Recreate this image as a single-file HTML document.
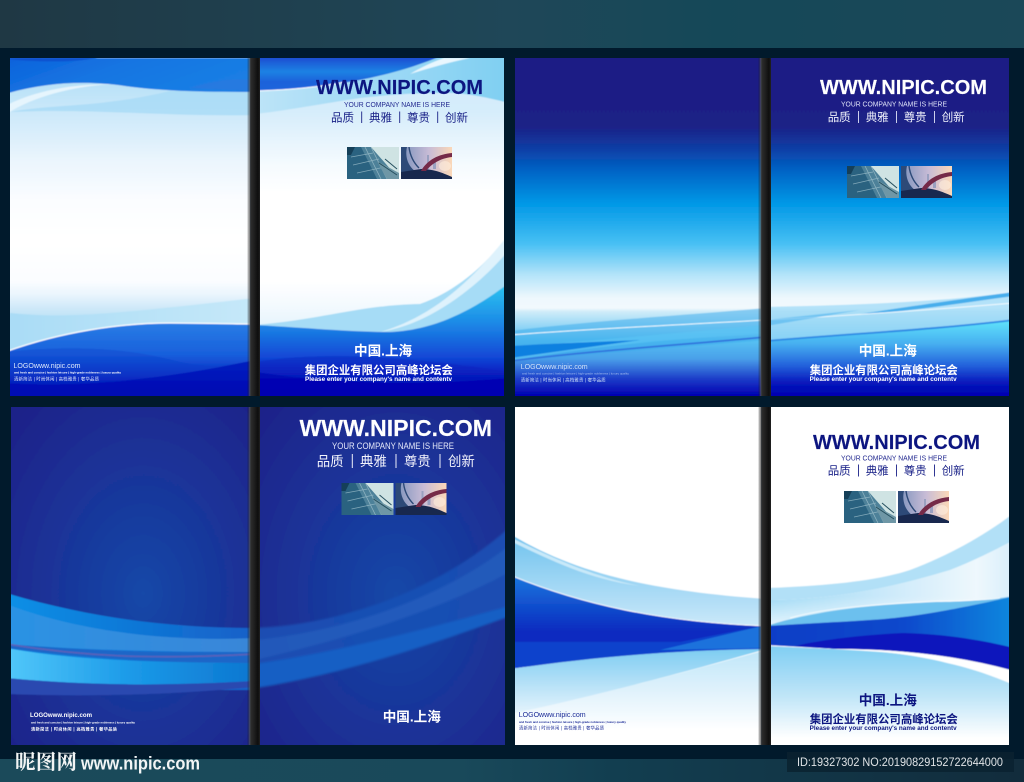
<!DOCTYPE html>
<html><head><meta charset="utf-8"><style>
html,body{margin:0;padding:0;background:#011a2c}
svg{display:block}
text{font-family:"Liberation Sans","Noto Sans CJK SC",sans-serif}
.b{font-weight:700}
.w{font-weight:700;stroke-width:.15;paint-order:stroke}
</style></head><body>
<svg width="1024" height="782" viewBox="0 0 1024 782" xmlns="http://www.w3.org/2000/svg">
<defs>
<filter id="s" x="-5%" y="-5%" width="110%" height="110%"><feGaussianBlur stdDeviation=".55"/></filter>
<filter id="s2" x="-5%" y="-5%" width="110%" height="110%"><feGaussianBlur stdDeviation="1.1"/></filter>
<linearGradient id="top" x1="0" x2="1" y1="0" y2="0"><stop offset="0" stop-color="#1f3844"/><stop offset=".5" stop-color="#1f4758"/><stop offset=".7" stop-color="#154858"/><stop offset="1" stop-color="#1b4858"/></linearGradient>
<linearGradient id="bot" x1="0" x2="1" y1="0" y2="0"><stop offset="0" stop-color="#1b4a5a"/><stop offset=".45" stop-color="#19495a"/><stop offset=".6" stop-color="#123e50"/><stop offset="1" stop-color="#122c3c"/></linearGradient>
<linearGradient id="spine" x1="0" x2="1" y1="0" y2="0"><stop offset="0" stop-color="#000" stop-opacity="0"/><stop offset=".2" stop-color="#555" stop-opacity=".7"/><stop offset=".32" stop-color="#2c2c2c"/><stop offset=".6" stop-color="#1c1c1c"/><stop offset=".85" stop-color="#0e0e0e"/><stop offset="1" stop-color="#222"/></linearGradient>

<linearGradient id="tlBase" gradientUnits="userSpaceOnUse" x1="0" x2="0" y1="58" y2="396"><stop offset="0" stop-color="#a8dbf6"/><stop offset=".18" stop-color="#d0eafa"/><stop offset=".3" stop-color="#eaf5fd"/><stop offset=".42" stop-color="#fbfdff"/><stop offset=".54" stop-color="#ffffff"/><stop offset=".66" stop-color="#fbfdff"/><stop offset=".7" stop-color="#eaf5fd"/><stop offset=".745" stop-color="#cbe7f8"/><stop offset=".78" stop-color="#b8e0f7"/><stop offset="1" stop-color="#a5d8f5"/></linearGradient>
<linearGradient id="trwB" gradientUnits="userSpaceOnUse" x1="0" x2="0" y1="58" y2="396"><stop offset="0" stop-color="#cfe9fa"/><stop offset=".16" stop-color="#d6edfb"/><stop offset=".24" stop-color="#e6f4fd"/><stop offset=".32" stop-color="#f6fbfe"/><stop offset=".4" stop-color="#ffffff"/><stop offset=".66" stop-color="#ffffff"/><stop offset=".74" stop-color="#f2f9fe"/><stop offset=".8" stop-color="#e4f4fc"/></linearGradient>
<linearGradient id="trBase" gradientUnits="userSpaceOnUse" x1="0" x2="0" y1="58" y2="396"><stop offset="0" stop-color="#1e1f85"/><stop offset=".2" stop-color="#1c2086"/><stop offset=".27" stop-color="#0e3fa6"/><stop offset=".33" stop-color="#0062c4"/><stop offset=".43" stop-color="#0098e6"/><stop offset=".55" stop-color="#48c0f4"/><stop offset=".64" stop-color="#b2e3f9"/><stop offset=".71" stop-color="#eef8fd"/><stop offset=".74" stop-color="#f2f9fd"/><stop offset=".75" stop-color="#d0ecf9"/><stop offset=".84" stop-color="#55bff2"/><stop offset=".89" stop-color="#4a9fe9"/><stop offset=".95" stop-color="#1c3cc8"/><stop offset="1" stop-color="#0000b0"/></linearGradient>
<linearGradient id="trLow" gradientUnits="userSpaceOnUse" x1="0" x2="0" y1="322" y2="396"><stop offset="0" stop-color="#5ee0fa"/><stop offset=".3" stop-color="#46aef0"/><stop offset=".58" stop-color="#2464dc"/><stop offset=".82" stop-color="#0818bc"/><stop offset="1" stop-color="#0000b0"/></linearGradient>
<linearGradient id="tb" x1="0" x2="1" y1="0" y2=".4"><stop offset="0" stop-color="#0a62dc"/><stop offset=".5" stop-color="#1876e2"/><stop offset="1" stop-color="#1a7ee4"/></linearGradient>
<linearGradient id="tbR" gradientUnits="userSpaceOnUse" x1="0" x2="0" y1="58" y2="92"><stop offset="0" stop-color="#1a4fd2"/><stop offset=".4" stop-color="#1c82e4"/><stop offset=".7" stop-color="#1a62da"/><stop offset="1" stop-color="#1b66dc"/></linearGradient>
<linearGradient id="bb" gradientUnits="userSpaceOnUse" x1="0" x2="0" y1="320" y2="396"><stop offset="0" stop-color="#2b80e6"/><stop offset=".45" stop-color="#1860dc"/><stop offset=".72" stop-color="#0a30c6"/><stop offset=".9" stop-color="#0006b4"/><stop offset="1" stop-color="#0000b0"/></linearGradient>
<linearGradient id="bbR" gradientUnits="userSpaceOnUse" x1="0" x2="0" y1="285" y2="396"><stop offset="0" stop-color="#2bc4f0"/><stop offset=".35" stop-color="#1c88e6"/><stop offset=".65" stop-color="#1248d6"/><stop offset=".85" stop-color="#0410ba"/><stop offset="1" stop-color="#0000b0"/></linearGradient>
<linearGradient id="lb" x1="0" x2="1" y1="0" y2="0"><stop offset="0" stop-color="#a9dcf6"/><stop offset="1" stop-color="#c6e8f9"/></linearGradient>
<linearGradient id="lbR" x1="0" x2="1" y1="0" y2="0"><stop offset="0" stop-color="#bde4f8"/><stop offset="1" stop-color="#7fcff2"/></linearGradient>
<radialGradient id="blBase" cx=".55" cy=".55" r=".72"><stop offset="0" stop-color="#1648a8"/><stop offset=".5" stop-color="#1a3499"/><stop offset="1" stop-color="#1d2289"/></radialGradient>
<linearGradient id="blCy" x1="0" x2="1" y1="0" y2="0"><stop offset="0" stop-color="#52c8fa"/><stop offset=".5" stop-color="#1b9ae8"/><stop offset="1" stop-color="#0d76d0"/></linearGradient>
<linearGradient id="blB1" x1="0" x2="1" y1="0" y2="0"><stop offset="0" stop-color="#0a90e6"/><stop offset="1" stop-color="#1560c8"/></linearGradient>
<linearGradient id="blB2" x1="0" x2="1" y1="0" y2="0"><stop offset="0" stop-color="#2b93e4"/><stop offset="1" stop-color="#3a86d8"/></linearGradient>
<linearGradient id="brB" x1="0" x2="0" y1="0" y2="1"><stop offset="0" stop-color="#1a78de"/><stop offset=".6" stop-color="#0a2cc0"/><stop offset="1" stop-color="#0a22c0"/></linearGradient>
<linearGradient id="brL" x1="0" x2="0" y1="0" y2="1"><stop offset="0" stop-color="#6fc2ee"/><stop offset="1" stop-color="#cfeafa"/></linearGradient>
<linearGradient id="brBot" gradientUnits="userSpaceOnUse" x1="0" x2="0" y1="650" y2="730"><stop offset="0" stop-color="#7fcdf2"/><stop offset=".55" stop-color="#c6e7f9"/><stop offset="1" stop-color="#fff"/></linearGradient>
<linearGradient id="brBotR" gradientUnits="userSpaceOnUse" x1="0" x2="0" y1="648" y2="738"><stop offset="0" stop-color="#82cff3"/><stop offset=".55" stop-color="#c2e6f8"/><stop offset="1" stop-color="#fff"/></linearGradient>
<linearGradient id="brMid" x1="0" x2="1" y1="0" y2="0"><stop offset="0" stop-color="#9bd8f5"/><stop offset=".5" stop-color="#cdeafa"/><stop offset=".85" stop-color="#eef8fd"/><stop offset="1" stop-color="#d8eefb"/></linearGradient>
<linearGradient id="brFade" gradientUnits="userSpaceOnUse" x1="0" x2="0" y1="596" y2="626"><stop offset="0" stop-color="#fff" stop-opacity="0"/><stop offset="1" stop-color="#fff" stop-opacity=".75"/></linearGradient>
<linearGradient id="brR2" x1="0" x2="1" y1="0" y2="0"><stop offset="0" stop-color="#0a3ec6"/><stop offset=".55" stop-color="#0a48cc"/><stop offset="1" stop-color="#0b88de"/></linearGradient>
<linearGradient id="sk2" x1="0" x2="1" y1="0" y2="0"><stop offset="0" stop-color="#7c92bc"/><stop offset=".55" stop-color="#c8bcd6"/><stop offset="1" stop-color="#fbd8b8"/></linearGradient>
<clipPath id="c1"><rect x="10" y="58" width="240" height="338"/></clipPath>
<clipPath id="c2"><rect x="260" y="58" width="244" height="338"/></clipPath>
<clipPath id="c3"><rect x="515" y="58" width="246" height="338"/></clipPath>
<clipPath id="c4"><rect x="771" y="58" width="238" height="338"/></clipPath>
<clipPath id="c5"><rect x="11" y="407" width="239" height="338"/></clipPath>
<clipPath id="c6"><rect x="260" y="407" width="245" height="338"/></clipPath>
<clipPath id="c7"><rect x="515" y="407" width="246" height="338"/></clipPath>
<clipPath id="c8"><rect x="771" y="407" width="238" height="338"/></clipPath>
<symbol id="ph" viewBox="0 0 105 32" width="105" height="32">
<rect x="0" y="0" width="52" height="32" fill="#cfe3e3"/>
<path d="M0,0 H24 L52,32 H0Z" fill="#4d8199"/>
<path d="M0,0 H14 L30,32 H0Z" fill="#2a6280"/>
<path d="M0,0 H8 L4,8 H0Z" fill="#153f58"/>
<path d="M24,0 L40,32 M18,0 L34,32 M4,10 L26,6 M6,18 L32,12 M10,26 L38,20" stroke="#a7c6d0" stroke-width=".8" opacity=".7"/>
<path d="M30,14 L52,26 V32 H40Z" fill="#6f97a6"/>
<path d="M32,16 L50,28 M38,12 L50,22" stroke="#26505f" stroke-width="1"/>
<rect x="54" y="0" width="51" height="32" fill="url(#sk2)"/>
<path d="M54,0 H60 C58,8 60,18 68,24 L68,32 H54Z" fill="#2d4a78"/>
<path d="M62,0 C63,8 66,15 72,21" fill="none" stroke="#2d4a78" stroke-width="1.4"/>
<path d="M80,22 V8 H82 V22Z M86,22 V14 H89 V22Z" fill="#9aa0c0"/>
<path d="M54,32 V25 L74,22 C88,22 98,27 105,30 V32Z" fill="#18284e"/>
<path d="M74,24 C80,13 92,7 105,6 V10 C94,11 84,17 79,24Z" fill="#752a48"/>
<ellipse cx="98" cy="19" rx="6" ry="5" fill="#ffeedd" opacity=".6"/>
</symbol>
</defs>

<rect width="1024" height="782" fill="#011a2c"/>
<rect width="1024" height="48" fill="url(#top)"/>
<rect y="759" width="1024" height="23" fill="url(#bot)"/>

<!-- TL left -->
<g clip-path="url(#c1)"><g filter="url(#s)">
<rect x="5" y="53" width="250" height="348" fill="url(#tlBase)"/>
<path d="M10,112 C50,104 100,108 170,91 L255,91 V115 C170,117 90,108 10,112Z" fill="#a8dbf6" opacity=".8"/>
<path d="M5,115 C30,98 70,86 115,84 C80,84 40,88 5,106Z" fill="#e6f5fd"/>
<path d="M5,58 H255 V92 C200,92 160,91 125,86 C90,81 50,81 5,94Z" fill="url(#tb)"/>
<path d="M5,53 H110 C90,63 50,63 5,59Z" fill="#0a4ccc" opacity=".8"/>
<path d="M190,88 C215,80 235,78 255,80 V91Z" fill="#3576dc" opacity=".45"/>
<path d="M10,313 C60,318 100,316 255,298 V324 C170,322 90,328 5,352Z" fill="url(#lb)"/>
<path d="M5,352 C60,332 120,323 170,323 C200,323 230,324 255,324 V401 H5Z" fill="url(#bb)"/>
<path d="M5,352 C60,332 120,323 170,323 C200,323 230,324 255,324" fill="none" stroke="#fff" stroke-width="1.2"/>
<path d="M5,352 C70,345 130,348 180,362 C210,368 230,366 255,360 V401 H5Z" fill="#0a3ac8" opacity=".32"/>
<path d="M5,383 C80,388 160,380 255,360 V401 H5Z" fill="#0000b0" opacity=".55"/>
</g></g>
<!-- TL right -->
<g clip-path="url(#c2)"><g filter="url(#s)">
<rect x="255" y="53" width="254" height="348" fill="url(#trwB)"/>
<path d="M255,90 C330,90 400,72 448,53 H509 V103 C490,98 470,94 455,93 C420,92 390,95 360,98 C320,104 290,110 255,114Z" fill="url(#lbR)"/>
<path d="M444,58 H470 C450,62 430,68 410,74 C420,68 432,62 444,58Z" fill="#e9f7fe"/>
<path d="M255,53 H448 C410,70 350,88 255,91Z" fill="url(#tbR)"/>
<path d="M255,91 C290,90 320,87 345,82" fill="none" stroke="#fff" stroke-width="1.1"/>
<path d="M255,325 C320,320 360,305 420,304 C460,290 490,260 509,234 V285 C480,305 440,330 390,332 C350,332 310,328 255,325Z" fill="#a6dcf6"/>
<path d="M380,332 C430,325 480,285 509,250 V234 C480,270 440,315 380,332Z" fill="#def2fc"/>
<path d="M255,325 C310,328 350,332 390,332 C440,330 480,305 509,283 V401 H255Z" fill="url(#bbR)"/>
<path d="M255,362 C330,350 420,358 509,372 V401 H255Z" fill="#0820bc" opacity=".4"/>
<path d="M255,372 C340,385 430,385 509,378 V401 H255Z" fill="#0000b0" opacity=".7"/>
</g></g>
<!-- TR left -->
<g clip-path="url(#c3)"><g filter="url(#s)">
<rect x="510" y="53" width="256" height="348" fill="url(#trBase)"/>
<path d="M510,331 C600,320 690,315 766,308 V340 L510,361Z" fill="#38a9ec" opacity=".5"/>
<path d="M510,346 C570,343 620,338 766,325 V334 C680,338 600,345 510,361Z" fill="#5cc4f4" opacity=".65"/>
<path d="M510,346 C560,343 600,342 640,340 L510,358Z" fill="#0a80e0"/>
<path d="M510,361 C600,350 680,345 766,337" fill="none" stroke="#2f6fdc" stroke-width="1.6"/>
<path d="M510,335 C600,328 680,325 766,320" fill="none" stroke="#f0faff" stroke-width="1"/>
</g></g>
<!-- TR right -->
<g clip-path="url(#c4)"><g filter="url(#s)">
<rect x="766" y="53" width="248" height="348" fill="url(#trBase)"/>
<path d="M766,307 C860,305 940,302 1014,292 V322 C930,328 860,335 766,341Z" fill="#9ad9f6" opacity=".7"/>
<path d="M860,314 C920,305 970,298 1014,292 V296 C960,303 910,312 860,314Z" fill="#46aeec"/>
<path d="M766,320 C860,315 930,310 1014,303" fill="none" stroke="#f4fbff" stroke-width=".9"/>
<path d="M766,326 L860,310 L766,320Z" fill="#4fb4ee" opacity=".6"/>
<path d="M766,341 C860,333 930,330 1014,320 V401 H766Z" fill="url(#trLow)"/>
<path d="M766,341 C860,333 930,330 1014,320" fill="none" stroke="#2a88e4" stroke-width="1.8"/>
</g></g>
<!-- BL left -->
<g clip-path="url(#c5)"><g filter="url(#s)">
<rect x="6" y="402" width="249" height="348" fill="url(#blBase)"/>
<path d="M6,593 C90,618 170,628 255,628 V690 H6Z" fill="url(#blB1)"/>
<path d="M6,604 C80,632 170,642 255,638 V652 C170,652 80,650 6,644Z" fill="url(#blB2)"/>
<path d="M6,644 C80,650 170,654 255,652 V664 C170,662 90,660 6,648Z" fill="#1c66c8"/>
<path d="M6,644 C80,656 150,660 255,654" fill="none" stroke="#5a62b8" stroke-width="1.6"/>
<path d="M6,648 C80,662 170,662 255,663 V681 C170,686 90,686 6,678Z" fill="url(#blCy)"/>
<path d="M6,678 C90,686 170,686 255,681 V687 C170,695 90,697 6,694Z" fill="#2a48b0"/>
</g></g>
<!-- BL right -->
<g clip-path="url(#c6)"><g filter="url(#s2)">
<rect x="250" y="397" width="265" height="358" fill="url(#blBase)"/>
<path d="M255,628 C340,625 440,590 510,527 V616 C430,645 340,675 255,688Z" fill="#1a50b4" opacity=".92"/>
<path d="M255,640 C340,632 440,600 510,545 V572 C430,615 340,640 255,660Z" fill="#2a62c0" opacity=".6"/>
<path d="M255,664 C350,650 440,625 510,606 V616 C430,645 340,675 255,688Z" fill="#1666cc" opacity=".7"/>
</g></g>
<!-- BR left -->
<g clip-path="url(#c7)"><g filter="url(#s)">
<rect x="510" y="402" width="256" height="348" fill="#fff"/>
<path d="M510,534 C570,570 640,590 766,599 V630 H510Z" fill="url(#brL)"/>
<path d="M510,537 C560,562 600,578 640,586 C590,580 550,560 510,541Z" fill="#c9e9f9"/>
<path d="M510,575 C580,604 660,622 766,626 V650 L510,668Z" fill="url(#brB)"/>
<path d="M510,575 C580,604 660,622 766,626" fill="none" stroke="#fff" stroke-width=".9"/>
<path d="M510,642 H680 L766,625 V650 C680,650 600,656 510,669Z" fill="#0a42cc"/>
<path d="M660,650 L766,625 V648Z" fill="#1a72dc"/>
<path d="M510,669 C600,656 680,650 766,649 C700,668 600,695 510,714Z" fill="url(#brBot)"/>
<path d="M510,714 C600,695 700,668 766,650 V750 H510Z" fill="url(#brBot)" opacity=".5"/>
</g></g>
<!-- BR right -->
<g clip-path="url(#c8)"><g filter="url(#s)">
<rect x="766" y="402" width="248" height="348" fill="#fff"/>
<path d="M766,600 C840,600 900,585 950,570 C975,560 995,550 1014,540 V600 L766,630Z" fill="url(#brMid)"/>
<path d="M766,596 H1014 V630 H766Z" fill="url(#brFade)"/>
<path d="M766,588 C830,586 880,580 910,570 C950,555 985,535 1014,513 V540 C995,550 975,560 950,570 C900,585 840,600 766,600Z" fill="#b2e0f7"/>
<path d="M766,626 C830,606 900,604 937,602 C960,602 990,600 1014,596 V606 L900,625Z" fill="#6cc0ee"/>
<path d="M790,618 C830,606 900,603 937,601 C960,601 990,600 1000,598" fill="none" stroke="#fff" stroke-width=".8" opacity=".9"/>
<path d="M766,626 C800,624 840,622 870,620 C900,618 920,615 937,612 C960,608 990,602 1014,596 V671 C960,655 900,648 837,649 L766,645Z" fill="url(#brR2)"/>
<path d="M795,646 C820,640 860,635 903,633 C950,634 990,642 1014,648 V671 C960,656 900,649 837,649Z" fill="#0a16bc"/>
<path d="M766,646 C800,648 840,649 880,652 C930,656 975,668 1014,685 V750 H766Z" fill="url(#brBotR)"/>
<path d="M837,649 C880,650 920,656 947,663 C970,668 995,676 1014,685 V671 C960,656 900,649 837,649Z" fill="#fff"/>
</g></g>

<!-- spines -->
<rect x="247" y="58" width="13" height="338" fill="url(#spine)"/>
<rect x="758" y="58" width="13" height="338" fill="url(#spine)"/>
<rect x="247" y="407" width="13" height="338" fill="url(#spine)"/>
<rect x="758" y="407" width="13" height="338" fill="url(#spine)"/>

<!-- photos -->
<use href="#ph" x="347" y="147"/>
<use href="#ph" x="847" y="166"/>
<use href="#ph" x="341.5" y="483"/>
<use href="#ph" x="844" y="491"/>

<!-- TL text -->
<g fill="#0c1580">
<text class="w" stroke="#0c1580" x="316" y="94" font-size="20" textLength="167" lengthAdjust="spacingAndGlyphs">WWW.NIPIC.COM</text>
<text x="344" y="107" font-size="7.6" fill="#232a90" textLength="106" lengthAdjust="spacingAndGlyphs">YOUR COMPANY NAME IS HERE</text>
<g font-size="11.5" fill="#1a2288"><text x="331" y="121.5">品质</text><text x="369" y="121.5">典雅</text><text x="407" y="121.5">尊贵</text><text x="445" y="121.5">创新</text></g>
</g>
<path d="M361.7,111.5V123M399.7,111.5V123M437.7,111.5V123" stroke="#1a2288" stroke-width=".9"/>
<g fill="#fff">
<text class="b" x="354" y="355.5" font-size="13.6">中国.上海</text>
<text class="b" x="304.7" y="374" font-size="11.4">集团企业有限公司高峰论坛会</text>
<text class="b" x="305" y="381" font-size="6" textLength="147" lengthAdjust="spacingAndGlyphs">Please enter your company's name and contentv</text>
<text x="13.5" y="368" font-size="7.6" textLength="67" fill="#dce9fb" lengthAdjust="spacingAndGlyphs">LOGOwww.nipic.com</text>
<text class="b" x="14" y="373.5" font-size="2.9" textLength="107" lengthAdjust="spacingAndGlyphs">and fresh and concise | fashion leisure | high-grade nobleness | luxury quality</text>
<text x="14" y="380.5" font-size="4.4" fill="#dce9fb" textLength="85">清新简洁 | 时尚休闲 | 高档雅贵 | 奢华品质</text>
</g>

<!-- TR text -->
<g fill="#fff">
<text class="w" stroke="#fff" x="820" y="94" font-size="20" textLength="167" lengthAdjust="spacingAndGlyphs">WWW.NIPIC.COM</text>
<text x="841" y="106.5" font-size="7.6" fill="#dfe3f8" textLength="106" lengthAdjust="spacingAndGlyphs">YOUR COMPANY NAME IS HERE</text>
<g font-size="11.5" fill="#eef0fb"><text x="827.7" y="121">品质</text><text x="865.7" y="121">典雅</text><text x="903.7" y="121">尊贵</text><text x="941.7" y="121">创新</text></g>
<text class="b" x="858.7" y="355.5" font-size="13.6">中国.上海</text>
<text class="b" x="809.7" y="374" font-size="11.4">集团企业有限公司高峰论坛会</text>
<text class="b" x="809.7" y="381" font-size="6" textLength="147" lengthAdjust="spacingAndGlyphs">Please enter your company's name and contentv</text>
<g fill="#cfe0f8"><text x="520.7" y="369" font-size="7.6" textLength="67" lengthAdjust="spacingAndGlyphs">LOGOwww.nipic.com</text>
<text x="522" y="374.5" font-size="2.9" opacity=".7" textLength="107" lengthAdjust="spacingAndGlyphs">and fresh and concise | fashion leisure | high-grade nobleness | luxury quality</text>
<text x="520.7" y="381.5" font-size="4.4" textLength="85">清新简洁 | 时尚休闲 | 高档雅贵 | 奢华品质</text></g>
</g>
<path d="M858.5,111V123M896.5,111V123M934.5,111V123" stroke="#dfe3f8" stroke-width=".9"/>

<!-- BL text -->
<g fill="#fff">
<text class="w" stroke="#fff" x="299.5" y="436" font-size="23" textLength="192.5" lengthAdjust="spacingAndGlyphs">WWW.NIPIC.COM</text>
<text x="332" y="449" font-size="8.8" fill="#e6e9fa" textLength="122" lengthAdjust="spacingAndGlyphs">YOUR COMPANY NAME IS HERE</text>
<g font-size="13.4" fill="#f2f3fc"><text x="316.7" y="466">品质</text><text x="360" y="466">典雅</text><text x="404" y="466">尊贵</text><text x="448" y="466">创新</text></g>
<text class="b" x="382.7" y="721.5" font-size="13.6">中国.上海</text>
<text class="b" x="30" y="717" font-size="6.6" textLength="62" lengthAdjust="spacingAndGlyphs">LOGOwww.nipic.com</text>
<text class="b" x="31" y="723.5" font-size="2.7" textLength="104" lengthAdjust="spacingAndGlyphs">and fresh and concise | fashion leisure | high-grade nobleness | luxury quality</text>
<text class="b" x="31" y="730.5" font-size="4.2" textLength="86">清新简洁 | 时尚休闲 | 高档雅贵 | 奢华品质</text>
</g>
<path d="M352.3,454V468M396,454V468M440,454V468" stroke="#eef0fb" stroke-width="1"/>

<!-- BR text -->
<g fill="#0c1580">
<text class="w" stroke="#0c1580" x="813" y="449" font-size="20" textLength="167" lengthAdjust="spacingAndGlyphs">WWW.NIPIC.COM</text>
<text x="841" y="460.5" font-size="7.6" fill="#232a90" textLength="106" lengthAdjust="spacingAndGlyphs">YOUR COMPANY NAME IS HERE</text>
<g font-size="11.5" fill="#1a2288"><text x="827.7" y="474.5">品质</text><text x="865.7" y="474.5">典雅</text><text x="903.7" y="474.5">尊贵</text><text x="941.7" y="474.5">创新</text></g>
<text class="b" x="858.7" y="705" font-size="13.6">中国.上海</text>
<text class="b" x="809.7" y="723" font-size="11.4">集团企业有限公司高峰论坛会</text>
<text class="b" x="809.7" y="730" font-size="6" textLength="147" lengthAdjust="spacingAndGlyphs">Please enter your company's name and contentv</text>
<g fill="#1a2a96"><text x="518.7" y="717" font-size="7.2" textLength="67" lengthAdjust="spacingAndGlyphs">LOGOwww.nipic.com</text>
<text class="b" x="519" y="723" font-size="2.8" textLength="107" lengthAdjust="spacingAndGlyphs">and fresh and concise | fashion leisure | high-grade nobleness | luxury quality</text>
<text x="519" y="729.5" font-size="4.3" textLength="85">清新简洁 | 时尚休闲 | 高档雅贵 | 奢华品质</text></g>
</g>
<path d="M858.5,464.5V476.5M896.5,464.5V476.5M934.5,464.5V476.5" stroke="#1a2288" stroke-width=".9"/>

<!-- watermark -->
<text x="15" y="769" font-size="20.5" font-weight="700" fill="#f2f4f4" textLength="62" style="font-family:'Noto Serif CJK SC','Noto Sans CJK SC',serif">昵图网</text>
<text class="b" x="81" y="769.5" font-size="18" fill="#f2f5f5" textLength="119" lengthAdjust="spacingAndGlyphs">www.nipic.com</text>
<rect x="787" y="752" width="227" height="20" fill="#0b2230" opacity=".85"/>
<text x="797" y="766" font-size="11.6" fill="#dfe3e6" textLength="206" lengthAdjust="spacingAndGlyphs">ID:19327302 NO:20190829152722644000</text>
</svg>
</body></html>
